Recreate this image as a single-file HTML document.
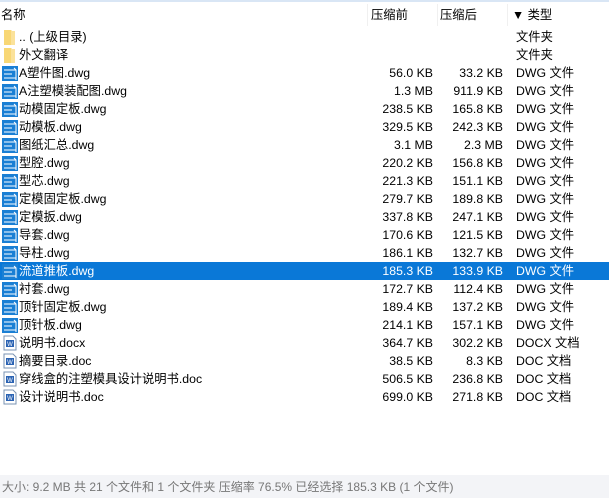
<!DOCTYPE html>
<html><head><meta charset="utf-8"><style>
body{margin:0;width:609px;height:498px;background:#fff;font-family:"Liberation Sans","Noto Sans CJK SC",sans-serif;font-size:12.3px;color:#000;position:relative;overflow:hidden}
.hdr{position:absolute;left:0;top:0;width:609px;height:26px;background:#fff;border-top:2px solid #d9e6f5;box-sizing:border-box}
.hdr span{position:absolute;top:3px}
.sep{position:absolute;top:2px;width:1px;height:22px;background:#f0f0f0}
.row{position:absolute;left:0;width:609px;height:18px;line-height:18px}
.row.sel{background:#0a78d7;color:#fff}
.n{position:absolute;left:19px}
.a{position:absolute;right:176px;text-align:right}
.b{position:absolute;right:106px;text-align:right}
.t{position:absolute;left:516px}
.ic{position:absolute;left:2px;top:1px;width:16px;height:16px}
.st{position:absolute;left:0;top:475px;width:609px;height:23px;background:#f3f4f7;color:#777;line-height:24px;padding-left:2px;font-size:12px}
</style></head><body>
<div class="hdr"><span style="left:1px">名称</span><span style="left:371px">压缩前</span><span style="left:440px">压缩后</span><span style="left:512px">▼ 类型</span>
<div class="sep" style="left:367px"></div><div class="sep" style="left:437px"></div><div class="sep" style="left:507px"></div></div>
<div id="rows"></div>
<div class="st">大小: 9.2 MB 共 21 个文件和 1 个文件夹 压缩率 76.5% 已经选择 185.3 KB (1 个文件)</div>
<script>
var F='<svg class="ic" viewBox="0 0 16 16"><path d="M2 1h7l1 1v14H2z" fill="#f8d775"/><path d="M9 2h4v14H9z" fill="#fbe29a"/></svg>';
var D='<svg class="ic" viewBox="0 0 16 16"><rect x="0" y="1" width="16" height="15" fill="#1a7fd4"/><path d="M2 5h12M2 9h8M2 13h12M12 3l2 2v10" stroke="#fff" stroke-width="1" fill="none"/></svg>';
var W='<svg class="ic" viewBox="0 0 16 16"><path d="M2 1h9l3 3v11H2z" fill="#fff" stroke="#7a93b3"/><rect x="4" y="5" width="8" height="7" fill="#2b63b3"/><text x="8" y="11" font-size="6" fill="#fff" text-anchor="middle" font-family="Liberation Sans">W</text></svg>';
var r=[[F,'.. (上级目录)','','','文件夹'],[F,'外文翻译','','','文件夹'],
[D,'A塑件图.dwg','56.0 KB','33.2 KB','DWG 文件'],[D,'A注塑模装配图.dwg','1.3 MB','911.9 KB','DWG 文件'],
[D,'动模固定板.dwg','238.5 KB','165.8 KB','DWG 文件'],[D,'动模板.dwg','329.5 KB','242.3 KB','DWG 文件'],
[D,'图纸汇总.dwg','3.1 MB','2.3 MB','DWG 文件'],[D,'型腔.dwg','220.2 KB','156.8 KB','DWG 文件'],
[D,'型芯.dwg','221.3 KB','151.1 KB','DWG 文件'],[D,'定模固定板.dwg','279.7 KB','189.8 KB','DWG 文件'],
[D,'定模扳.dwg','337.8 KB','247.1 KB','DWG 文件'],[D,'导套.dwg','170.6 KB','121.5 KB','DWG 文件'],
[D,'导柱.dwg','186.1 KB','132.7 KB','DWG 文件'],[D,'流道推板.dwg','185.3 KB','133.9 KB','DWG 文件'],
[D,'衬套.dwg','172.7 KB','112.4 KB','DWG 文件'],[D,'顶针固定板.dwg','189.4 KB','137.2 KB','DWG 文件'],
[D,'顶针板.dwg','214.1 KB','157.1 KB','DWG 文件'],[W,'说明书.docx','364.7 KB','302.2 KB','DOCX 文档'],
[W,'摘要目录.doc','38.5 KB','8.3 KB','DOC 文档'],[W,'穿线盒的注塑模具设计说明书.doc','506.5 KB','236.8 KB','DOC 文档'],
[W,'设计说明书.doc','699.0 KB','271.8 KB','DOC 文档']];
var h='';r.forEach(function(x,i){h+='<div class="row'+(i==13?' sel':'')+'" style="top:'+(28+i*18)+'px">'+x[0]+'<span class="n">'+x[1]+'</span><span class="a">'+x[2]+'</span><span class="b">'+x[3]+'</span><span class="t">'+x[4]+'</span></div>';});
document.getElementById('rows').innerHTML=h;
</script>
</body></html>
